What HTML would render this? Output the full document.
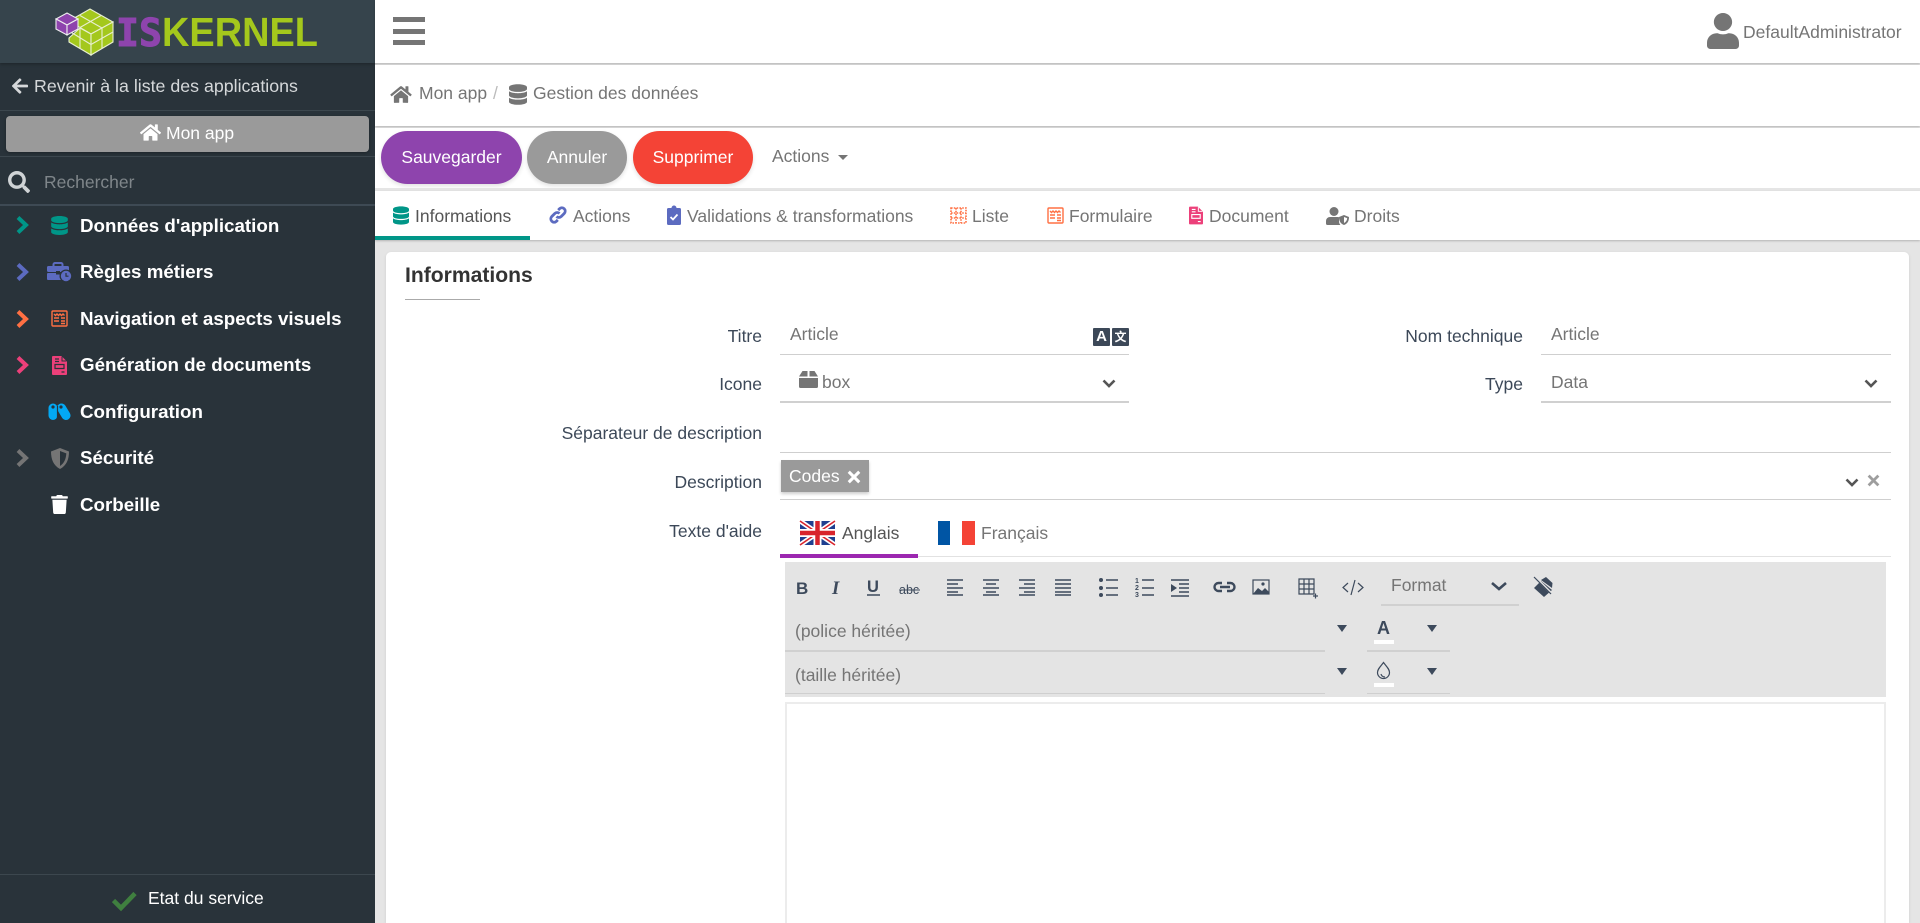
<!DOCTYPE html>
<html lang="fr">
<head>
<meta charset="utf-8">
<title>Informations</title>
<style>
html,body{margin:0;padding:0;width:1920px;height:923px;overflow:hidden;background:#e5e5e5;font-family:"Liberation Sans",Arial,sans-serif;font-size:17.5px;color:#3c4858}
#root{position:relative;width:1920px;height:923px;overflow:hidden}
.a{position:absolute}
.t{position:absolute;white-space:nowrap;line-height:24px;height:24px}
svg{display:block;overflow:visible}
svg.a{position:absolute}
.side{position:absolute;left:0;top:0;width:375px;height:923px;background:#29333a}
.m{color:#fff;font-weight:bold;font-size:18.75px;left:80px}
.lab{color:#3c4858;text-align:right;width:300px}
.gr{color:#757575}
.bar{position:absolute;left:375px;width:1545px;background:#fff;box-shadow:0 1px 2px rgba(0,0,0,.22)}
.btn{position:absolute;top:131px;height:53px;border-radius:27px;color:#fff;text-align:center;line-height:52px;font-size:17.5px;box-shadow:0 2px 4px rgba(0,0,0,.12)}
.tab{color:#757575;top:204px}
.ln{position:absolute;background:#cfcfcf;height:1px}
.tb{position:absolute;background:#d0d0d0;height:2px}
</style>
</head>
<body>
<div id="root">
<svg width="0" height="0" style="position:absolute">
<symbol id="db" viewBox="0 0 448 512"><path d="M448 73.143v45.714C448 159.143 347.667 192 224 192S0 159.143 0 118.857V73.143C0 32.857 100.333 0 224 0s224 32.857 224 73.143zM448 176v102.857C448 319.143 347.667 352 224 352S0 319.143 0 278.857V176c48.125 33.143 136.208 48.572 224 48.572S399.874 209.143 448 176zm0 160v102.857C448 479.143 347.667 512 224 512S0 479.143 0 438.857V336c48.125 33.143 136.208 48.572 224 48.572S399.874 369.143 448 336z"/></symbol>
<symbol id="home" viewBox="0 0 576 512"><path d="M280.37 148.26L96 300.11V464a16 16 0 0 0 16 16l112.06-.29a16 16 0 0 0 15.92-16V368a16 16 0 0 1 16-16h64a16 16 0 0 1 16 16v95.64a16 16 0 0 0 16 16.05L464 480a16 16 0 0 0 16-16V300L295.67 148.26a12.19 12.19 0 0 0-15.3 0zM571.6 251.47L488 182.56V44.05a12 12 0 0 0-12-12h-56a12 12 0 0 0-12 12v72.61L318.47 43a48 48 0 0 0-61 0L4.34 251.47a12 12 0 0 0-1.6 16.9l25.5 31A12 12 0 0 0 45.15 301l235.22-193.74a12.19 12.19 0 0 1 15.3 0L530.9 301a12 12 0 0 0 16.9-1.6l25.5-31a12 12 0 0 0-1.7-16.93z"/></symbol>
<symbol id="chev" viewBox="0 0 14 20"><path d="M3 2.500l8 7.500-8 7.500" fill="none" stroke="currentColor" stroke-width="4"/></symbol>
<symbol id="down" viewBox="0 0 14 9"><path d="M1.500 1.500L7 7l5.500-5.500" fill="none" stroke="currentColor" stroke-width="2.600"/></symbol>
<symbol id="x" viewBox="0 0 12 12"><path d="M1.500 1.500l9 9m0-9l-9 9" fill="none" stroke="currentColor" stroke-width="2.600"/></symbol>
</svg>

<!-- SIDEBAR -->
<div class="side"></div>
<div class="a" style="left:0;top:0;width:375px;height:63px;background:#36444c;box-shadow:0 1px 3px rgba(0,0,0,.3)"></div>
<svg class="a" style="left:0;top:0" width="375" height="63" viewBox="0 0 375 63">
  <g stroke="#e8efd0" stroke-width="1.100" fill="#a4c81c">
    <polygon points="90,9 113,22 91,34 69,21" />
    <polygon points="69,38 80,28 91,34 91,55 69,42" />
    <polygon points="91,34 113,22 113,42 91,55" />
    <path d="M80,15.500L102,28M101,15.500L80,27.500M80,28V48.500M69,31L91,44.500M102,28V48.500M113,32L91,44.500" fill="none"/>
  </g>
  <g stroke="#eee" stroke-width="1.100" fill="#8e44ad">
    <polygon points="67,13 78,19 67,25 56,19"/>
    <polygon points="56,19 67,25 67,35 56,29"/>
    <polygon points="67,25 78,19 78,29 67,35"/>
  </g>
  <text x="116" y="46" font-family="DejaVu Sans Mono" font-weight="bold" font-size="38" fill="#8e44ad" stroke="#8e44ad" stroke-width="1" textLength="46" lengthAdjust="spacingAndGlyphs">IS</text>
  <text x="162" y="46" font-family="Liberation Sans" font-weight="bold" font-size="41" fill="#a4c81c" textLength="156" lengthAdjust="spacingAndGlyphs">KERNEL</text>
</svg>

<svg class="a" style="left:12px;top:77px" width="16" height="18" fill="#d5d8da"><path transform="scale(.0357 .0352)" d="M257.500 445.100l-22.200 22.200c-9.400 9.400-24.600 9.400-33.900 0L7 273c-9.400-9.400-9.400-24.600 0-33.900L201.400 44.700c9.400-9.400 24.600-9.400 33.900 0l22.200 22.200c9.500 9.500 9.300 25-.4 34.300L136.600 216H424c13.300 0 24 10.700 24 24v32c0 13.300-10.700 24-24 24H136.600l120.500 114.800c9.800 9.300 10 24.800.4 34.300z"/></svg>
<div class="t" style="left:34px;top:74px;color:#d5d8da;font-size:17.8px">Revenir à la liste des applications</div>
<div class="a" style="left:0;top:110px;width:375px;height:1px;background:#3c474e"></div>
<div class="a" style="left:6px;top:116px;width:363px;height:36px;background:#9a9a9a;border-radius:4px;box-shadow:0 1px 3px rgba(0,0,0,.3)"></div>
<svg class="a" style="left:140px;top:123px;fill:#fff" width="21" height="19"><use href="#home"/></svg>
<div class="t" style="left:166px;top:121px;color:#fff;font-size:17.5px">Mon app</div>
<div class="a" style="left:0;top:156px;width:375px;height:1px;background:#3c474e"></div>
<svg class="a" style="left:8px;top:171px;fill:#cfd3d5" width="22" height="22" viewBox="0 0 512 512"><path d="M505 442.700L405.300 343c-4.500-4.500-10.600-7-17-7H372c27.600-35.300 44-79.700 44-128C416 93.100 322.900 0 208 0S0 93.100 0 208s93.100 208 208 208c48.300 0 92.700-16.400 128-44v16.300c0 6.400 2.500 12.500 7 17l99.700 99.700c9.400 9.400 24.600 9.400 33.900 0l28.300-28.300c9.400-9.400 9.400-24.600.1-34zM208 336c-70.700 0-128-57.200-128-128 0-70.700 57.200-128 128-128 70.700 0 128 57.200 128 128 0 70.700-57.200 128-128 128z"/></svg>
<div class="t" style="left:44px;top:170px;color:#7f868a;font-size:17.5px">Rechercher</div>
<div class="a" style="left:0;top:204px;width:375px;height:2px;background:#3e4a54"></div>

<svg class="a" style="left:15px;top:215px;color:#009688" width="14" height="20"><use href="#chev"/></svg>
<svg class="a" style="left:51px;top:216px;fill:#009688" width="17" height="19"><use href="#db"/></svg>
<div class="t m" style="top:214px">Données d'application</div>

<svg class="a" style="left:15px;top:262px;color:#5c6bc0" width="14" height="20"><use href="#chev"/></svg>
<svg class="a" style="left:47px;top:262px" width="25" height="20" viewBox="0 0 25 20"><path d="M6.500 4.500V2.500A1.500 1.500 0 0 1 8 1h6a1.500 1.500 0 0 1 1.500 1.500v2" fill="none" stroke="#5c6bc0" stroke-width="2"/><rect x="0" y="4" width="22" height="6" rx="1.500" fill="#5c6bc0"/><rect x="0" y="11" width="18" height="7" rx="1" fill="#5c6bc0"/><rect x="9" y="9" width="4" height="3.500" fill="#29333a"/><circle cx="19" cy="14" r="6.500" fill="#29333a"/><circle cx="19" cy="14" r="5.200" fill="#5c6bc0"/><path d="M19 11v3.200h2.500" stroke="#29333a" stroke-width="1.200" fill="none"/></svg>
<div class="t m" style="top:260px">Règles métiers</div>

<svg class="a" style="left:15px;top:309px;color:#ff7043" width="14" height="20"><use href="#chev"/></svg>
<svg class="a" style="left:51px;top:310px" width="17" height="17" viewBox="0 0 17 17" fill="none" stroke="#ff7043" stroke-width="1.400"><rect x="1" y="1" width="15" height="15" rx="1"/><path d="M3 4l1.500 1.500L6 4l1.500 1.500L9 4l1.500 1.500L12 4l1.500 1.500M3 8h5m2 0h4M3 11h5m2 0h4m-4 2.500h4"/></svg>
<div class="t m" style="top:307px">Navigation et aspects visuels</div>

<svg class="a" style="left:15px;top:355px;color:#ec407a" width="14" height="20"><use href="#chev"/></svg>
<svg class="a" style="left:52px;top:356px" width="15" height="19" viewBox="0 0 15 19"><path d="M1 0h8.500L15 5.500V18a1 1 0 0 1-1 1H1a1 1 0 0 1-1-1V1a1 1 0 0 1 1-1z" fill="#ec407a"/><path d="M3 3h4M3 5.500h4M3 8.500h9v4H3zM9.500 16h3" fill="none" stroke="#29333a" stroke-width="1.200"/><path d="M10 .5V5h4.500" fill="none" stroke="#29333a" stroke-width="1"/></svg>
<div class="t m" style="top:353px">Génération de documents</div>

<svg class="a" style="left:48px;top:403px" width="23" height="18" viewBox="0 0 23 18" fill="none" stroke="#03a9f4" stroke-linecap="round"><path d="M5 5V12.500" stroke-width="9"/><path d="M13.500 5L18 12.500" stroke-width="9"/><path d="M9.500 3L9.500 15" stroke="#29333a" stroke-width="1.200" stroke-linecap="butt"/><circle cx="5" cy="4" r="1.600" fill="#29333a" stroke="none"/><circle cx="13" cy="4" r="1.600" fill="#29333a" stroke="none"/></svg>
<div class="t m" style="top:400px">Configuration</div>

<svg class="a" style="left:15px;top:448px;color:#757575" width="14" height="20"><use href="#chev"/></svg>
<svg class="a" style="left:50px;top:448px" width="20" height="21" viewBox="0 0 20 21"><path d="M10 0l9 3.500c0 8-2.500 14-9 17.500C3.500 17.500 1 11.500 1 3.500z" fill="#757575"/><path d="M10 3v15c4-2.600 6-6.800 6.300-12.600z" fill="#29333a"/></svg>
<div class="t m" style="top:446px">Sécurité</div>

<svg class="a" style="left:51px;top:495px;fill:#fff" width="17" height="19" viewBox="0 0 448 512"><path d="M432 32H312l-9.400-18.700A24 24 0 0 0 281.100 0H166.800a23.720 23.720 0 0 0-21.400 13.300L136 32H16A16 16 0 0 0 0 48v32a16 16 0 0 0 16 16h416a16 16 0 0 0 16-16V48a16 16 0 0 0-16-16zM53.200 467a48 48 0 0 0 47.900 45h245.800a48 48 0 0 0 47.900-45L416 128H32z"/></svg>
<div class="t m" style="top:493px">Corbeille</div>

<div class="a" style="left:0;top:874px;width:375px;height:1px;background:#3c474e"></div>
<svg class="a" style="left:111px;top:891px" width="26" height="20" viewBox="0 0 26 20"><path d="M2.500 9.500l7.500 7.500L24 2.500" fill="none" stroke="#3f7f3f" stroke-width="4.600"/></svg>
<div class="t" style="left:148px;top:886px;color:#fff;font-size:17.5px">Etat du service</div>

<!-- TOP BAR -->
<div class="bar" style="top:0;height:63px"></div>
<div class="a" style="left:393px;top:17px;width:32px;height:5px;background:#757575"></div>
<div class="a" style="left:393px;top:29px;width:32px;height:5px;background:#757575"></div>
<div class="a" style="left:393px;top:40px;width:32px;height:5px;background:#757575"></div>
<svg class="a" style="left:1707px;top:13px;fill:#757575" width="32" height="36"><path transform="scale(.0714 .0703)" d="M224 256c70.700 0 128-57.300 128-128S294.700 0 224 0 96 57.300 96 128s57.300 128 128 128zm89.600 32h-16.700c-22.200 10.200-46.900 16-72.900 16s-50.600-5.800-72.900-16h-16.700C60.200 288 0 348.200 0 422.400V464c0 26.500 21.500 48 48 48h352c26.500 0 48-21.500 48-48v-41.600c0-74.200-60.200-134.400-134.400-134.400z"/></svg>
<div class="t gr" style="left:1743px;top:20px">DefaultAdministrator</div>

<!-- BREADCRUMB -->
<div class="bar" style="top:65px;height:61px"></div>
<svg class="a" style="left:390px;top:85px;fill:#757575" width="22" height="19"><use href="#home"/></svg>
<div class="t gr" style="left:419px;top:81px">Mon app</div>
<div class="t" style="left:493px;top:81px;color:#bbb">/</div>
<svg class="a" style="left:509px;top:84px;fill:#757575" width="18" height="21"><use href="#db"/></svg>
<div class="t gr" style="left:533px;top:81px">Gestion des données</div>

<!-- ACTIONS -->
<div class="bar" style="top:128px;height:60px;box-shadow:none"></div>
<div class="btn" style="left:381px;width:141px;background:#8e44ad">Sauvegarder</div>
<div class="btn" style="left:527px;width:100px;background:#9a9a9a">Annuler</div>
<div class="btn" style="left:633px;width:120px;background:#f44336">Supprimer</div>
<div class="t gr" style="left:772px;top:144px">Actions</div>
<svg class="a" style="left:838px;top:155px;fill:#757575" width="10" height="5" viewBox="0 0 10 5" preserveAspectRatio="none"><path d="M0 0h10L5 5z"/></svg>

<!-- TABS -->
<div class="a" style="left:375px;top:188px;width:1545px;height:3px;background:#e5e5e5"></div>
<div class="bar" style="top:191px;height:49px"></div>
<div class="a" style="left:375px;top:236px;width:155px;height:4px;background:#009688"></div>

<svg class="a" style="left:393px;top:206px;fill:#009688" width="16" height="19"><use href="#db"/></svg>
<div class="t tab" style="left:415px;color:#555">Informations</div>

<svg class="a" style="left:549px;top:206px;fill:none;stroke:#5c6bc0;stroke-width:2.800" width="18" height="18" viewBox="0 0 18 18"><path d="M7.500 10.500a3.300 3.300 0 0 0 4.700 0l3-3a3.300 3.300 0 0 0-4.700-4.700l-1.300 1.300"/><path d="M10.500 7.500a3.300 3.300 0 0 0-4.700 0l-3 3a3.300 3.300 0 0 0 4.700 4.700l1.300-1.300"/></svg>
<div class="t tab" style="left:573px">Actions</div>

<svg class="a" style="left:667px;top:205px" width="14" height="20" viewBox="0 0 14 20"><path d="M1.500 3H4.500a2.500 2.500 0 0 1 5 0h3A1.500 1.500 0 0 1 14 4.500V18.500a1.500 1.500 0 0 1-1.500 1.500h-11A1.500 1.500 0 0 1 0 18.500V4.500A1.500 1.500 0 0 1 1.500 3z" fill="#5c6bc0"/><path d="M3.500 12l2.500 2.500L10.500 9.500" fill="none" stroke="#fff" stroke-width="1.800"/></svg>
<div class="t tab" style="left:687px">Validations &amp; transformations</div>

<svg class="a" style="left:950px;top:207px" width="17" height="17" viewBox="0 0 17 17" fill="none" stroke="#ff7043" stroke-width="1.600" stroke-dasharray="1.600 1.200"><rect x="1" y="1" width="15" height="15"/><path d="M1 6h15M1 11h15M6 1v15M11 1v15"/></svg>
<div class="t tab" style="left:972px">Liste</div>

<svg class="a" style="left:1047px;top:207px" width="17" height="17" viewBox="0 0 17 17" fill="none" stroke="#ff7043" stroke-width="1.400"><rect x="1" y="1" width="15" height="15" rx="1"/><path d="M3 4l1.500 1.500L6 4l1.500 1.500L9 4l1.500 1.500L12 4l1.500 1.500M3 8h5m2 0h4M3 11h5m2 0h4m-4 2.500h4"/></svg>
<div class="t tab" style="left:1069px">Formulaire</div>

<svg class="a" style="left:1189px;top:206px" width="14" height="19" viewBox="0 0 15 19"><path d="M1 0h8.500L15 5.500V18a1 1 0 0 1-1 1H1a1 1 0 0 1-1-1V1a1 1 0 0 1 1-1z" fill="#ec407a"/><path d="M3 3h4M3 5.500h4M3 8.500h9v4H3zM9.500 16h3" fill="none" stroke="#fff" stroke-width="1.200"/><path d="M10 .5V5h4.500" fill="none" stroke="#fff" stroke-width="1"/></svg>
<div class="t tab" style="left:1209px">Document</div>

<svg class="a" style="left:1326px;top:207px" width="23" height="18" viewBox="0 0 23 18" fill="#757575"><circle cx="8" cy="4.500" r="4.500"/><path d="M4 10h8a3 3 0 0 1 1 .2V14c0 1.600.5 3 1.400 4H1.500A1.500 1.500 0 0 1 0 16.500V14a4 4 0 0 1 4-4z"/><path d="M18 8l5 2c0 4-1.500 6.700-5 8-3.500-1.300-5-4-5-8z"/><path d="M18 10v6c2-1 3-2.600 3.200-4.900z" fill="#fff"/></svg>
<div class="t tab" style="left:1354px">Droits</div>

<!-- CARD -->
<div class="a" style="left:386px;top:252px;width:1523px;height:671px;background:#fff;border-radius:5px 5px 0 0;box-shadow:0 1px 3px rgba(0,0,0,.1)"></div>
<div class="t" style="left:405px;top:264px;font-weight:bold;font-size:21.1px;color:#333">Informations</div>
<div class="a" style="left:405px;top:299px;width:75px;height:1px;background:#aaa"></div>

<div class="t lab" style="left:462px;top:324px">Titre</div>
<div class="t gr" style="left:790px;top:322px">Article</div>
<div class="ln" style="left:780px;top:354px;width:349px"></div>
<div class="a" style="left:1093px;top:328px;width:17px;height:18px;background:#3c4858;border-radius:1px;color:#fff;font:bold 15px/18px 'Liberation Sans',sans-serif;text-align:center">A</div>
<div class="a" style="left:1112px;top:328px;width:17px;height:18px;background:#3c4858;border-radius:1px;color:#fff;font:bold 12px/18px 'Noto Sans CJK SC',sans-serif;text-align:center">文</div>

<div class="t lab" style="left:1223px;top:324px">Nom technique</div>
<div class="t gr" style="left:1551px;top:322px">Article</div>
<div class="ln" style="left:1541px;top:354px;width:350px"></div>

<div class="t lab" style="left:462px;top:372px">Icone</div>
<svg class="a" style="left:799px;top:371px;fill:#757575" width="19" height="17" viewBox="0 0 19 17"><path d="M3.500 0h5v5.500H0zM10.500 0h5L19 5.500h-8.500zM0 7h19v8.500a1.500 1.500 0 0 1-1.500 1.500h-16A1.500 1.500 0 0 1 0 15.500z"/></svg>
<div class="t gr" style="left:822px;top:370px">box</div>
<svg class="a" style="left:1102px;top:379px;color:#555" width="14" height="9"><use href="#down"/></svg>
<div class="tb" style="left:780px;top:401px;width:349px"></div>

<div class="t lab" style="left:1223px;top:372px">Type</div>
<div class="t gr" style="left:1551px;top:370px">Data</div>
<svg class="a" style="left:1864px;top:379px;color:#555" width="14" height="9"><use href="#down"/></svg>
<div class="tb" style="left:1541px;top:401px;width:350px"></div>

<div class="t lab" style="left:462px;top:421px">Séparateur de description</div>
<div class="ln" style="left:780px;top:452px;width:1111px"></div>

<div class="t lab" style="left:462px;top:470px">Description</div>
<div class="a" style="left:781px;top:460px;width:88px;height:32px;background:#9a9a9a;box-shadow:0 2px 3px rgba(0,0,0,.2)"></div>
<div class="t" style="left:789px;top:464px;color:#fff">Codes</div>
<svg class="a" style="left:847px;top:470px;color:#fff" width="14" height="14"><use href="#x"/></svg>
<svg class="a" style="left:1845px;top:478px;color:#555" width="14" height="9"><use href="#down"/></svg>
<svg class="a" style="left:1867px;top:474px;color:#9e9e9e" width="13" height="13"><use href="#x"/></svg>
<div class="ln" style="left:780px;top:499px;width:1111px"></div>

<div class="t lab" style="left:462px;top:519px">Texte d'aide</div>

<svg class="a" style="left:800px;top:521px" width="35" height="24" viewBox="0 0 35 24"><rect width="35" height="24" fill="#1f3f8f"/><path d="M0 0L35 24M35 0L0 24" stroke="#fff" stroke-width="5"/><path d="M0 0L35 24M35 0L0 24" stroke="#d8242c" stroke-width="1.600"/><path d="M17.500 0V24M0 12H35" stroke="#fff" stroke-width="8"/><path d="M17.500 0V24M0 12H35" stroke="#d8242c" stroke-width="4.500"/></svg>
<div class="t" style="left:842px;top:521px;color:#555">Anglais</div>
<div class="a" style="left:938px;top:521px;width:12px;height:24px;background:#0055a4"></div>
<div class="a" style="left:962px;top:521px;width:13px;height:24px;background:#f44336"></div>
<div class="t gr" style="left:981px;top:521px">Français</div>
<div class="a" style="left:780px;top:556px;width:1111px;height:1px;background:#e2e2e2"></div>
<div class="a" style="left:780px;top:554px;width:138px;height:4px;background:#9c27b0"></div>

<!-- EDITOR TOOLBAR -->
<div class="a" style="left:785px;top:562px;width:1101px;height:135px;background:#e4e4e4"></div>
<div class="a" style="left:785px;top:702px;width:1097px;height:230px;border:2px solid #ececec;background:#fff"></div>

<svg class="a" style="left:785px;top:562px;overflow:visible" width="1101" height="135" viewBox="785 562 1101 135">
<g fill="none" stroke="#3d4a5c">
<text x="796" y="594" font-family="Liberation Sans" font-weight="bold" font-size="17" fill="#3d4a5c" stroke="none">B</text>
<text x="832" y="594" font-family="Liberation Serif" font-style="italic" font-weight="bold" font-size="18.500" fill="#3d4a5c" stroke="none">I</text>
<text x="867" y="592" font-family="Liberation Sans" font-weight="bold" font-size="16.500" fill="#3d4a5c" stroke="none">U</text>
<path d="M867 595h13" stroke-width="1.500"/>
<text x="899" y="594" font-family="Liberation Sans" font-size="12.500" fill="#3d4a5c" stroke="none">abc</text>
<path d="M899 590h21" stroke-width="1"/>
<g stroke-width="1.400">
<path d="M947 580h16M947 584h11M947 588h16M947 592h11M947 595h16"/>
<path d="M983 580h16M986 584h10M983 588h16M986 592h10M983 595h16"/>
<path d="M1019 580h16M1024 584h11M1019 588h16M1024 592h11M1019 595h16"/>
<path d="M1055 580h16M1055 584h16M1055 588h16M1055 592h16M1055 595h16"/>
<path d="M1106 580h12M1106 588h12M1106 595h12M1142 580h12M1142 588h12M1142 595h12"/>
<path d="M1171 580h18M1179 584h10M1179 588h10M1179 592h10M1171 596h18"/>
</g>
<g fill="#3d4a5c" stroke="none"><circle cx="1101" cy="580" r="2"/><circle cx="1101" cy="588" r="2"/><circle cx="1101" cy="595" r="2"/>
<path d="M1171 584l6 4-6 4z"/>
<text x="1135" y="583" font-size="7" font-family="Liberation Sans" font-weight="bold">1</text><text x="1135" y="590" font-size="7" font-family="Liberation Sans" font-weight="bold">2</text><text x="1135" y="597" font-size="7" font-family="Liberation Sans" font-weight="bold">3</text></g>
<path d="M1222 583h-3.500a4 4 0 0 0 0 8h3.500m5-8h3.500a4 4 0 0 1 0 8h-3.500M1220 587h10" stroke-width="2.400"/>
<rect x="1253" y="580" width="16" height="14" stroke-width="1.200" style="fill:#e4e4e4"/>
<path d="M1253 594l5-6 4 3 3-3 4 4v2z" fill="#3d4a5c" stroke="none"/><circle cx="1263" cy="584" r="1.600" fill="#3d4a5c" stroke="none"/>
<path d="M1299 579h15v15h-15zM1304 579v15M1309 579v15M1299 584h15M1299 589h15" stroke-width="1.200"/>
<path d="M1313 596h5M1315.500 593.500v5" stroke-width="1.200"/>
<path d="M1348 583l-5 4.500 5 4.500M1358 583l5 4.500-5 4.500M1355 580l-4 15" stroke-width="1.200"/>
<path d="M1492 583l7 6 7-6" stroke-width="2.600"/>
<path d="M1534 588l7-7 11 9-8 7z" fill="#3d4a5c" stroke="none"/>
<path d="M1541 580l5-3 6.500 6-.5 5z" fill="#3d4a5c" stroke="none"/>
<path d="M1535 577l17 17" stroke="#e4e4e4" stroke-width="2.500"/>
<path d="M1534 577l17 17" stroke-width="1.200"/>
</g>
<g fill="#3d4a5c">
<path d="M1337 625h10l-5 7zM1337 668h10l-5 7zM1427 625h10l-5 7zM1427 668h10l-5 7z"/>
<text x="1377" y="634" font-family="Liberation Sans" font-weight="bold" font-size="18">A</text>
</g>
<path d="M1383.500 662.500c3 4 6 6.500 6 10a6 6 0 0 1-12 0c0-3.500 3-6 6-10zM1381 674c.5 2 2 3 4 3" fill="none" stroke="#3d4a5c" stroke-width="1.200"/>
<rect x="1374" y="640" width="20" height="4" fill="#fff"/>
<rect x="1374" y="683" width="20" height="4" fill="#fff"/>
</svg>
<div class="t gr" style="left:1391px;top:573px">Format</div>
<div class="tb" style="left:1381px;top:604px;width:138px"></div>
<div class="t gr" style="left:795px;top:619px">(police héritée)</div>
<div class="tb" style="left:785px;top:650px;width:540px"></div>
<div class="tb" style="left:1367px;top:650px;width:83px"></div>
<div class="t gr" style="left:795px;top:663px">(taille héritée)</div>
<div class="ln" style="left:785px;top:693px;width:540px"></div>
<div class="ln" style="left:1367px;top:693px;width:83px"></div>
</div>
</body>
</html>
